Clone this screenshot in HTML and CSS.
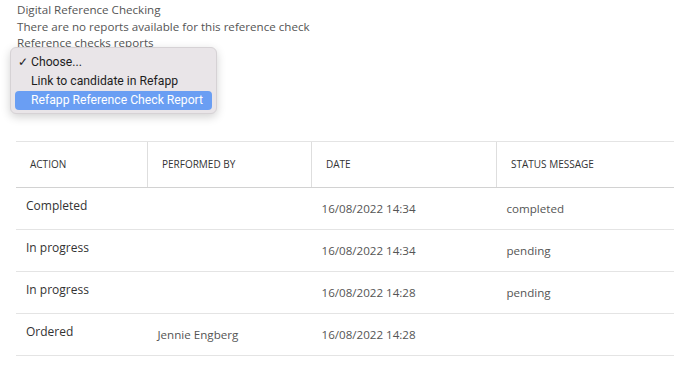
FILE: index.html
```html
<!DOCTYPE html>
<html lang="en">
<head>
  <meta charset="UTF-8">
  <title>Digital Reference Checking</title>
  <link rel="stylesheet" href="styles.css">
</head>
<body>
  <div class="intro">
    <div>Digital Reference Checking</div>
    <div>There are no reports available for this reference check</div>
    <div>Reference checks reports</div>
  </div>

  <!-- open select menu -->
  <div class="menu">
    <div class="menu-item"><span class="check">✓</span>Choose...</div>
    <div class="menu-item">Link to candidate in Refapp</div>
    <div class="menu-item selected">Refapp Reference Check Report</div>
  </div>

  <table class="log">
    <thead>
      <tr>
        <th class="col-action">Action</th>
        <th class="col-by">Performed by</th>
        <th class="col-date">Date</th>
        <th>Status message</th>
      </tr>
    </thead>
    <tbody>
      <tr>
        <td><span class="action">Completed</span></td>
        <td></td>
        <td>16/08/2022 14:34</td>
        <td>completed</td>
      </tr>
      <tr>
        <td><span class="action">In progress</span></td>
        <td></td>
        <td>16/08/2022 14:34</td>
        <td>pending</td>
      </tr>
      <tr>
        <td><span class="action">In progress</span></td>
        <td></td>
        <td>16/08/2022 14:28</td>
        <td>pending</td>
      </tr>
      <tr>
        <td><span class="action">Ordered</span></td>
        <td>Jennie Engberg</td>
        <td>16/08/2022 14:28</td>
        <td></td>
      </tr>
    </tbody>
  </table>
</body>
</html>
```

FILE: styles.css
```css
body {
  margin: 0;
  padding: 2px 14px 0 16px;
  font-family: "Open Sans", sans-serif;
  font-size: 11.6px;
  color: #555;
  background: #fff;
  position: relative;
}

.intro {
  line-height: 16.5px;
  padding-left: 1px;
}

.menu {
  position: absolute;
  left: 10px;
  top: 47px;
  width: 197px;
  padding: 5px 4px 3px;
  background: #e9e5e8;
  border: 1px solid #d6d2d5;
  border-radius: 6px;
  box-shadow: 0 3px 10px rgba(0,0,0,0.18);
  font-family: Roboto, sans-serif;
  font-size: 12.2px;
  color: #1e1e1e;
}

.menu-item {
  height: 19px;
  line-height: 19px;
  padding-left: 16px;
  border-radius: 4px;
  position: relative;
}

.check {
  position: absolute;
  left: 3px;
}

.menu-item.selected {
  background: #6a9ef3;
  color: #fff;
}

.log {
  margin-top: 89px;
  width: 658px;
  border-collapse: collapse;
}

.log th {
  height: 45px;
  padding: 0 14px;
  text-align: left;
  font-size: 10px;
  font-weight: 500;
  text-transform: uppercase;
  color: #333;
  border-top: 1px solid #e4e4e4;
  border-bottom: 1px solid #d2d2d2;
}

.log th + th {
  border-left: 1px solid #dedede;
}

.col-action { width: 103px; }
.col-by { width: 135px; }
.col-date { width: 156px; }

.log td {
  height: 40px;
  padding: 1px 10px 0;
  border-bottom: 1px solid #e4e4e4;
  vertical-align: middle;
}

.action {
  position: relative;
  top: -3px;
  color: #333;
  font-size: 12px;
}
```
